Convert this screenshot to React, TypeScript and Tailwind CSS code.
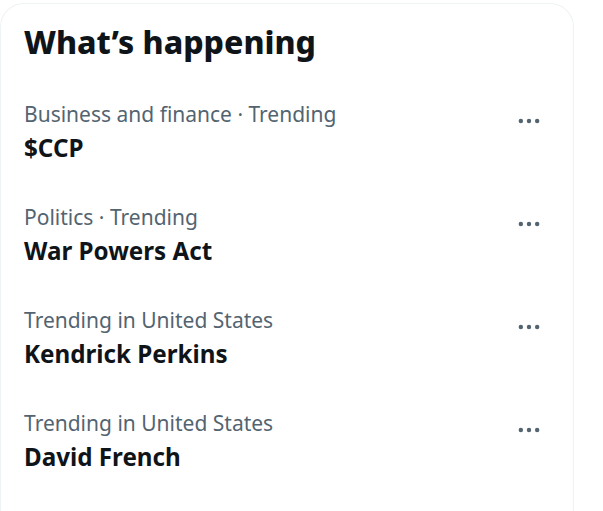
const TRENDS = [
  { category: 'Business and finance · Trending', title: '$CCP' },
  { category: 'Politics · Trending', title: 'War Powers Act' },
  { category: 'Trending in United States', title: 'Kendrick Perkins' },
  { category: 'Trending in United States', title: 'David French' },
];

function MoreIcon() {
  return (
    <svg viewBox="0 0 24 24" className="h-7 w-7 fill-[#536471]">
      <circle cx="5" cy="12" r="1.9" />
      <circle cx="12" cy="12" r="1.9" />
      <circle cx="19" cy="12" r="1.9" />
    </svg>
  );
}

export default function App() {
  return (
    <div className="min-h-screen bg-white pt-[3px] font-['Segoe_UI','Noto_Sans',sans-serif]">
      <div className="w-[574px] rounded-t-[24px] border border-b-0 border-[#eff3f4] pb-10">
        <h2 className="px-[23px] pt-5 pb-5 text-[32px] font-extrabold leading-[36px] text-[#0f1419]">
          What’s happening
        </h2>
        {TRENDS.map((t) => (
          <div key={t.title} className="flex items-start justify-between px-[23px] py-[20.5px]">
            <div className="flex flex-col">
              <span className="text-[21px] leading-[26px] text-[#536471]">{t.category}</span>
              <span className="mt-[6px] text-[24.2px] font-bold leading-[30px] text-[#0f1419]">
                {t.title}
              </span>
            </div>
            <div className="mr-[7px] mt-[6px]">
              <MoreIcon />
            </div>
          </div>
        ))}
      </div>
    </div>
  );
}
